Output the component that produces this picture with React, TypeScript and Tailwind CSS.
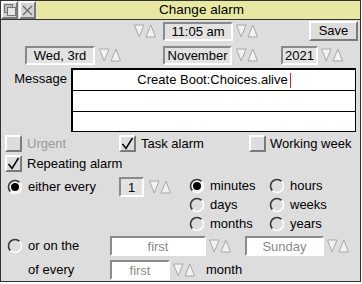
import React from 'react';

const sunken = 'border-2 border-t-[#8a8a8a] border-l-[#8a8a8a] border-b-white border-r-white';
const raised = 'border-2 border-t-white border-l-white border-b-[#7a7a7a] border-r-[#7a7a7a]';

const Arrows = ({ className = '' }: { className?: string }) => (
  <svg width="24" height="16" viewBox="0 0 24 16" className={className}>
    <polygon points="1.5,2 11,2 6.2,14" fill="#f2f2f2" stroke="#a8a8a8" strokeWidth="1" />
    <polygon points="13,14 22.5,14 17.8,2" fill="#f2f2f2" stroke="#a8a8a8" strokeWidth="1" />
  </svg>
);

const Radio = ({ on = false }: { on?: boolean }) => (
  <svg width="16" height="16" viewBox="0 0 16 16" className="shrink-0">
    <path d="M3.4 12.6 A6.5 6.5 0 0 1 12.6 3.4" stroke="#3a3a3a" strokeWidth="1.6" fill="none" />
    <path d="M12.6 3.4 A6.5 6.5 0 0 1 3.4 12.6" stroke="#ffffff" strokeWidth="1.6" fill="none" />
    {on && <circle cx="8" cy="8" r="5.2" fill="#ffffff" />}
    {on && <circle cx="8" cy="8" r="4" fill="#000000" />}
  </svg>
);

const Check = ({ on = false }: { on?: boolean }) => (
  <div className={`w-[17px] h-[17px] shrink-0 bg-[#dddddd] flex items-center justify-center ${raised}`}>
    {on && (
      <svg width="13" height="13" viewBox="0 0 13 13">
        <path d="M1.5 7 L5 11.5 L11.5 1" stroke="#000" strokeWidth="1.5" fill="none" />
      </svg>
    )}
  </div>
);

const Field = ({ text, className = '', white = false, grey = false }: { text: string; className?: string; white?: boolean; grey?: boolean }) => (
  <div
    className={`h-[19px] flex items-center justify-center leading-none ${sunken} ${white ? 'bg-white' : 'bg-[#e2e2e2]'} ${grey ? 'text-[#8a8a8a]' : ''} ${className}`}
  >
    {text}
  </div>
);

export default function App() {
  return (
    <div className="w-[362px] h-[284px] bg-white font-['Liberation_Sans',Arial,sans-serif] text-[13px] text-black">
      <div className="w-[361px] h-[282px] border border-[#333333] bg-[#dddddd] flex flex-col">
        {/* title bar */}
        <div className="flex h-[19px] border-b border-[#333333] shrink-0">
          <div className={`w-[17px] h-[18px] bg-[#d4d4d4] flex items-center justify-center ${raised} border`}>
            <svg width="12" height="12" viewBox="0 0 12 12">
              <rect x="0.5" y="0.5" width="8" height="8" fill="#bdbdbd" stroke="#777" />
              <rect x="3.5" y="3.5" width="8" height="8" fill="#e4e4e4" stroke="#777" />
            </svg>
          </div>
          <div className={`w-[17px] h-[18px] ml-px bg-[#d4d4d4] flex items-center justify-center ${raised} border`}>
            <svg width="11" height="11" viewBox="0 0 11 11">
              <path d="M1 1 L10 10 M10 1 L1 10" stroke="#6a6a6a" strokeWidth="1.3" />
            </svg>
          </div>
          <div className="flex-1 ml-px bg-[#e8e8a2] flex items-center justify-center text-[13.5px] pl-[6px]">
            Change alarm
          </div>
        </div>

        {/* time row */}
        <div className="flex items-center h-[22px]">
          <Arrows className="ml-[132px]" />
          <Field text="11:05 am" className="ml-[6px] w-[70px]" />
          <Arrows className="ml-[2px]" />
          <div className={`ml-[50px] w-[49px] h-[20px] bg-[#dddddd] flex items-center justify-center ${raised}`}>Save</div>
        </div>

        {/* date row */}
        <div className="flex items-center h-[20px] mt-[3px]">
          <Field text="Wed, 3rd" className="ml-[24px] w-[70px]" />
          <Arrows className="ml-[3px]" />
          <Field text="November" className="ml-[41px] w-[69px]" />
          <Arrows className="ml-[3px]" />
          <Field text="2021" className="ml-[22px] w-[37px]" />
          <Arrows className="ml-[2px]" />
        </div>

        {/* message */}
        <div className="flex mt-[3px]">
          <div className="w-[66px] h-[21px] flex items-center justify-end">Message</div>
          <div className="ml-[4px] w-[285px] border border-black border-l-2 border-t-2 bg-white flex flex-col">
            <div className="h-[20px] flex items-center justify-center">
              <span>Create Boot:Choices.alive</span>
              <span className="w-px h-[15px] bg-[#e02020] ml-[2px]" />
            </div>
            <div className="h-[21px] border-t border-black" />
            <div className="h-[20px] border-t border-black" />
          </div>
        </div>

        {/* options */}
        <div className="flex items-center h-[17px] mt-[3px]">
          <div className="flex items-center ml-[4px] w-[114px]">
            <Check />
            <span className="ml-[5px] text-[#9a9a9a]">Urgent</span>
          </div>
          <div className="flex items-center w-[130px]">
            <Check on />
            <span className="ml-[5px]">Task alarm</span>
          </div>
          <div className="flex items-center">
            <Check />
            <span className="ml-[4px]">Working week</span>
          </div>
        </div>
        <div className="flex items-center h-[17px] mt-[3px] ml-[4px]">
          <Check on />
          <span className="ml-[5px]">Repeating alarm</span>
        </div>

        {/* either every */}
        <div className="flex items-start mt-[4px]">
          <div className="flex items-center h-[22px] ml-[6px] w-[112px]">
            <Radio on />
            <span className="ml-[5px]">either every</span>
          </div>
          <div className="flex items-center h-[22px]">
            <Field text="1" className="w-[25px] h-[20px]" />
            <Arrows className="ml-[4px]" />
          </div>
          <div className="ml-[17px] grid grid-cols-[80px_80px]">
            {[
              ['minutes', true],
              ['hours', false],
              ['days', false],
              ['weeks', false],
              ['months', false],
              ['years', false],
            ].map(([label, on]) => (
              <div key={label as string} className="flex items-center h-[19px]">
                <Radio on={on as boolean} />
                <span className="ml-[5px]">{label as string}</span>
              </div>
            ))}
          </div>
        </div>

        {/* or on the */}
        <div className="flex items-center h-[20px] mt-[3px]">
          <div className="flex items-center ml-[6px] w-[103px]">
            <Radio />
            <span className="ml-[5px]">or on the</span>
          </div>
          <Field text="first" white grey className="w-[96px] h-[20px]" />
          <Arrows className="ml-[2px]" />
          <Field text="Sunday" white grey className="ml-[13px] w-[79px] h-[20px]" />
          <Arrows className="ml-[2px]" />
        </div>
        <div className="flex items-center h-[20px] mt-[4px]">
          <div className="ml-[6px] w-[103px] pl-[21px]">of every</div>
          <Field text="first" white grey className="w-[60px] h-[20px]" />
          <Arrows className="ml-[2px]" />
          <span className="ml-[10px]">month</span>
        </div>
      </div>
    </div>
  );
}
